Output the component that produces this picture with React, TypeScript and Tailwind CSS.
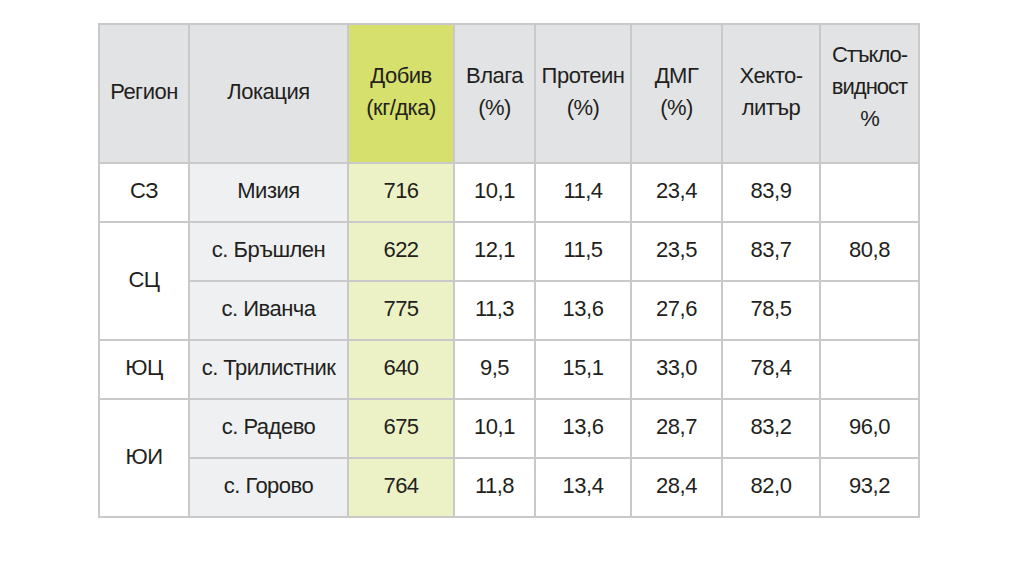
import React from "react";

type Row = {
  region?: string;
  span?: number;
  loc: string;
  yield_: string;
  moist: string;
  prot: string;
  dmg: string;
  hl: string;
  glass: string;
};

const rows: Row[] = [
  { region: "СЗ", span: 1, loc: "Мизия", yield_: "716", moist: "10,1", prot: "11,4", dmg: "23,4", hl: "83,9", glass: "" },
  { region: "СЦ", span: 2, loc: "с. Бръшлен", yield_: "622", moist: "12,1", prot: "11,5", dmg: "23,5", hl: "83,7", glass: "80,8" },
  { loc: "с. Иванча", yield_: "775", moist: "11,3", prot: "13,6", dmg: "27,6", hl: "78,5", glass: "" },
  { region: "ЮЦ", span: 1, loc: "с. Трилистник", yield_: "640", moist: "9,5", prot: "15,1", dmg: "33,0", hl: "78,4", glass: "" },
  { region: "ЮИ", span: 2, loc: "с. Радево", yield_: "675", moist: "10,1", prot: "13,6", dmg: "28,7", hl: "83,2", glass: "96,0" },
  { loc: "с. Горово", yield_: "764", moist: "11,8", prot: "13,4", dmg: "28,4", hl: "82,0", glass: "93,2" },
];

const cell = "border-2 border-[#c9c9c9] text-center align-middle p-0 pb-[4px]";

export default function App() {
  return (
    <div
      className="w-[1024px] h-[576px] bg-white pt-[23px] pl-[98px] text-[#231f20] text-[22px] tracking-[-0.5px]"
      style={{ fontFamily: '"Liberation Sans", Arial, sans-serif' }}
    >
      <table className="table-fixed border-collapse w-[820px]">
        <colgroup>
          <col className="w-[90px]" />
          <col className="w-[159px]" />
          <col className="w-[106px]" />
          <col className="w-[81px]" />
          <col className="w-[96px]" />
          <col className="w-[91px]" />
          <col className="w-[98px]" />
          <col className="w-[99px]" />
        </colgroup>
        <thead>
          <tr className="h-[139px] leading-[32px]">
            <th className={`${cell} font-normal bg-[#e2e3e5]`}>Регион</th>
            <th className={`${cell} font-normal bg-[#e2e3e5]`}>Локация</th>
            <th className={`${cell} font-normal bg-[#d6e06c]`}>
              Добив
              <br />
              (кг/дка)
            </th>
            <th className={`${cell} font-normal bg-[#e2e3e5]`}>
              Влага
              <br />
              (%)
            </th>
            <th className={`${cell} font-normal bg-[#e2e3e5]`}>
              Протеин
              <br />
              (%)
            </th>
            <th className={`${cell} font-normal bg-[#e2e3e5]`}>
              ДМГ
              <br />
              (%)
            </th>
            <th className={`${cell} font-normal bg-[#e2e3e5]`}>
              Хекто-
              <br />
              литър
            </th>
            <th className="border-2 border-[#c9c9c9] text-center align-middle p-0 pb-[14px] font-normal bg-[#e2e3e5] tracking-[-1px]">
              Стъкло-
              <br />
              видност
              <br />%
            </th>
          </tr>
        </thead>
        <tbody>
          {rows.map((r, i) => (
            <tr key={i} className="h-[59px]">
              {r.region && (
                <td rowSpan={r.span} className={`${cell} bg-white`}>
                  {r.region}
                </td>
              )}
              <td className={`${cell} bg-[#eef0f2]`}>{r.loc}</td>
              <td className={`${cell} bg-[#edf2c6]`}>{r.yield_}</td>
              <td className={`${cell} bg-white`}>{r.moist}</td>
              <td className={`${cell} bg-white`}>{r.prot}</td>
              <td className={`${cell} bg-white`}>{r.dmg}</td>
              <td className={`${cell} bg-white`}>{r.hl}</td>
              <td className={`${cell} bg-white`}>{r.glass}</td>
            </tr>
          ))}
        </tbody>
      </table>
    </div>
  );
}
